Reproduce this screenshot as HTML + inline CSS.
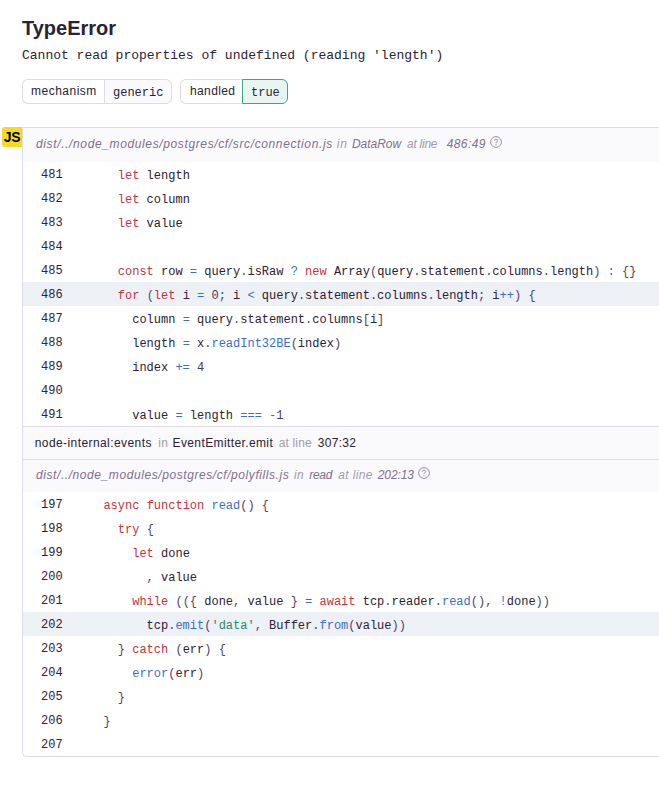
<!DOCTYPE html>
<html><head><meta charset="utf-8">
<style>
*{box-sizing:border-box;margin:0;padding:0}
html,body{width:659px;height:785px;overflow:hidden;background:#fff;color:#2b2233;font-family:"Liberation Sans",sans-serif}
.a{position:absolute}
#title{left:22px;top:15px;font-size:20px;font-weight:bold;line-height:26px;white-space:nowrap}
#msg{left:22px;top:47px;font-family:"Liberation Mono",monospace;font-size:13px;line-height:18px;white-space:pre}
.tk{position:absolute;top:79px;height:25px;border:1px solid #e0dce5;border-right:none;border-radius:6px 0 0 6px;font-size:12px;line-height:22px;padding-left:8px;white-space:nowrap;color:#2b2233}
.tv{position:absolute;top:79px;height:25px;border:1px solid #e0dce5;border-radius:0 6px 6px 0;background:#faf9fb;font-family:"Liberation Mono",monospace;font-size:12px;line-height:26px;padding-left:8px;white-space:nowrap;color:#2b2233}
#box{left:22px;top:127px;width:700px;height:630px;border:1px solid #e0dce5;border-right:none;border-radius:0 0 0 5px;overflow:hidden;background:#fff}
#js{left:2px;top:127px;width:20px;height:20px;background:#f6d829;border-radius:3px 0 0 3px;font-weight:bold;font-size:14px;line-height:20px;text-align:center;color:#000;letter-spacing:-0.3px}
.bg{position:absolute;left:0;width:700px;background:#faf9fb}
.bt{border-top:1px solid #e0dce5}
.hs{position:absolute;font-size:12px;line-height:14px;white-space:pre}
.fn{color:#80708f}
.lt{color:#a49bae}
.dk{color:#2b2233}
.ln{position:absolute;left:23px;width:700px;height:24px;line-height:24px;white-space:pre;font-family:"Liberation Mono",monospace;font-size:12px;color:#2b2233}
.ln .n{position:absolute;left:18px;top:1px}
.ln .c{position:absolute;left:66px;top:2px}
.ln.hl{background:#edf0f5}
.k{color:#c0343f}
.o{color:#3a6fc4}
.f2{color:#3a6fc4}
.s{color:#2a8a65}
.p{color:#4f4460}
.nm{color:#3f3a6e}
.cl{color:#2b2233}
</style></head><body>
<div id="title" class="a">TypeError</div>
<div id="msg" class="a">Cannot read properties of undefined (reading 'length')</div>
<div class="tk" style="left:22px;width:83px;letter-spacing:0.5px">mechanism</div><div class="tv" style="left:104px;width:68px">generic</div>
<div class="tk" style="left:180px;width:63px;letter-spacing:0.37px;padding-left:9px">handled</div><div class="tv" style="left:242px;width:46px;border-color:#3aa68a;background:#e9f5f1">true</div>
<div id="box" class="a">
<div class="bg" style="top:0;height:34px"></div>
<div class="bg bt" style="top:298px;height:33px"></div>
<div class="bg bt" style="top:331px;height:33px"></div>
</div>
<div class="ln" style="top:162px"><span class="n">481</span><span class="c">    <span class="k">let</span> length</span></div>
<div class="ln" style="top:186px"><span class="n">482</span><span class="c">    <span class="k">let</span> column</span></div>
<div class="ln" style="top:210px"><span class="n">483</span><span class="c">    <span class="k">let</span> value</span></div>
<div class="ln" style="top:234px"><span class="n">484</span><span class="c"></span></div>
<div class="ln" style="top:258px"><span class="n">485</span><span class="c">    <span class="k">const</span> row <span class="o">=</span> query<span class="p">.</span>isRaw <span class="o">?</span> <span class="k">new</span> <span class="cl">Array</span><span class="p">(</span>query<span class="p">.</span>statement<span class="p">.</span>columns<span class="p">.</span>length<span class="p">)</span> <span class="o">:</span> <span class="p">{}</span></span></div>
<div class="ln hl" style="top:282px"><span class="n">486</span><span class="c">    <span class="k">for</span> <span class="p">(</span><span class="k">let</span> i <span class="o">=</span> <span class="nm">0</span><span class="p">;</span> i <span class="o">&lt;</span> query<span class="p">.</span>statement<span class="p">.</span>columns<span class="p">.</span>length<span class="p">;</span> i<span class="o">++</span><span class="p">)</span> <span class="p">{</span></span></div>
<div class="ln" style="top:306px"><span class="n">487</span><span class="c">      column <span class="o">=</span> query<span class="p">.</span>statement<span class="p">.</span>columns<span class="p">[</span>i<span class="p">]</span></span></div>
<div class="ln" style="top:330px"><span class="n">488</span><span class="c">      length <span class="o">=</span> x<span class="p">.</span><span class="f2">readInt32BE</span><span class="p">(</span>index<span class="p">)</span></span></div>
<div class="ln" style="top:354px"><span class="n">489</span><span class="c">      index <span class="o">+=</span> <span class="nm">4</span></span></div>
<div class="ln" style="top:378px"><span class="n">490</span><span class="c"></span></div>
<div class="ln" style="top:402px"><span class="n">491</span><span class="c">      value <span class="o">=</span> length <span class="o">===</span> <span class="o">-</span><span class="nm">1</span></span></div>
<div class="ln" style="top:492px"><span class="n">197</span><span class="c">  <span class="k">async</span> <span class="k">function</span> <span class="f2">read</span><span class="p">()</span> <span class="p">{</span></span></div>
<div class="ln" style="top:516px"><span class="n">198</span><span class="c">    <span class="k">try</span> <span class="p">{</span></span></div>
<div class="ln" style="top:540px"><span class="n">199</span><span class="c">      <span class="k">let</span> done</span></div>
<div class="ln" style="top:564px"><span class="n">200</span><span class="c">        <span class="p">,</span> value</span></div>
<div class="ln" style="top:588px"><span class="n">201</span><span class="c">      <span class="k">while</span> <span class="p">(({</span> done<span class="p">,</span> value <span class="p">}</span> <span class="o">=</span> <span class="k">await</span> tcp<span class="p">.</span>reader<span class="p">.</span><span class="f2">read</span><span class="p">(),</span> <span class="o">!</span>done<span class="p">))</span></span></div>
<div class="ln hl" style="top:612px"><span class="n">202</span><span class="c">        tcp<span class="p">.</span><span class="f2">emit</span><span class="p">(</span><span class="s">'data'</span><span class="p">,</span> Buffer<span class="p">.</span><span class="f2">from</span><span class="p">(</span>value<span class="p">))</span></span></div>
<div class="ln" style="top:636px"><span class="n">203</span><span class="c">    <span class="p">}</span> <span class="k">catch</span> <span class="p">(</span>err<span class="p">)</span> <span class="p">{</span></span></div>
<div class="ln" style="top:660px"><span class="n">204</span><span class="c">      <span class="f2">error</span><span class="p">(</span>err<span class="p">)</span></span></div>
<div class="ln" style="top:684px"><span class="n">205</span><span class="c">    <span class="p">}</span></span></div>
<div class="ln" style="top:708px"><span class="n">206</span><span class="c">  <span class="p">}</span></span></div>
<div class="ln" style="top:732px"><span class="n">207</span><span class="c"></span></div>
<div class="hs fn" style="left:36.0px;top:137px;letter-spacing:0.627px;font-style:italic">dist/../node_modules/postgres/cf/src/connection.js</div>
<div class="hs lt" style="left:336.7px;top:137px;letter-spacing:1.000px;font-style:italic">in</div>
<div class="hs fn" style="left:352.0px;top:137px;letter-spacing:-0.050px;font-style:italic">DataRow</div>
<div class="hs lt" style="left:407.0px;top:137px;letter-spacing:-0.250px;font-style:italic">at line</div>
<div class="hs fn" style="left:446.7px;top:137px;letter-spacing:0.400px;font-style:italic">486:49</div>
<svg class="a" style="left:490px;top:136px" width="12" height="12" viewBox="0 0 12 12"><circle cx="6" cy="6" r="5.4" fill="none" stroke="#9a8fa6" stroke-width="1"/><path d="M4.4 4.7 Q4.4 3.2 6 3.2 Q7.6 3.2 7.6 4.6 Q7.6 5.5 6.6 5.9 Q6 6.2 6 7 L6 7.3" fill="none" stroke="#9a8fa6" stroke-width="1"/><circle cx="6" cy="8.8" r="0.6" fill="#9a8fa6"/></svg>
<div class="hs dk" style="left:34.7px;top:436px;letter-spacing:0.421px">node-internal:events</div>
<div class="hs lt" style="left:158.2px;top:436px;letter-spacing:0.300px">in</div>
<div class="hs dk" style="left:172.5px;top:436px;letter-spacing:0.388px">EventEmitter.emit</div>
<div class="hs lt" style="left:278.8px;top:436px;letter-spacing:0.133px">at line</div>
<div class="hs dk" style="left:317.7px;top:436px;letter-spacing:0.320px">307:32</div>
<div class="hs fn" style="left:36.0px;top:468px;letter-spacing:0.575px;font-style:italic">dist/../node_modules/postgres/cf/polyfills.js</div>
<div class="hs lt" style="left:294.0px;top:468px;letter-spacing:0.300px;font-style:italic">in</div>
<div class="hs fn" style="left:309.3px;top:468px;letter-spacing:-0.333px;font-style:italic">read</div>
<div class="hs lt" style="left:338.3px;top:468px;letter-spacing:0.333px;font-style:italic">at line</div>
<div class="hs fn" style="left:377.7px;top:468px;letter-spacing:-0.080px;font-style:italic">202:13</div>
<svg class="a" style="left:418px;top:467px" width="12" height="12" viewBox="0 0 12 12"><circle cx="6" cy="6" r="5.4" fill="none" stroke="#9a8fa6" stroke-width="1"/><path d="M4.4 4.7 Q4.4 3.2 6 3.2 Q7.6 3.2 7.6 4.6 Q7.6 5.5 6.6 5.9 Q6 6.2 6 7 L6 7.3" fill="none" stroke="#9a8fa6" stroke-width="1"/><circle cx="6" cy="8.8" r="0.6" fill="#9a8fa6"/></svg>
<div id="js" class="a">JS</div>
</body></html>
